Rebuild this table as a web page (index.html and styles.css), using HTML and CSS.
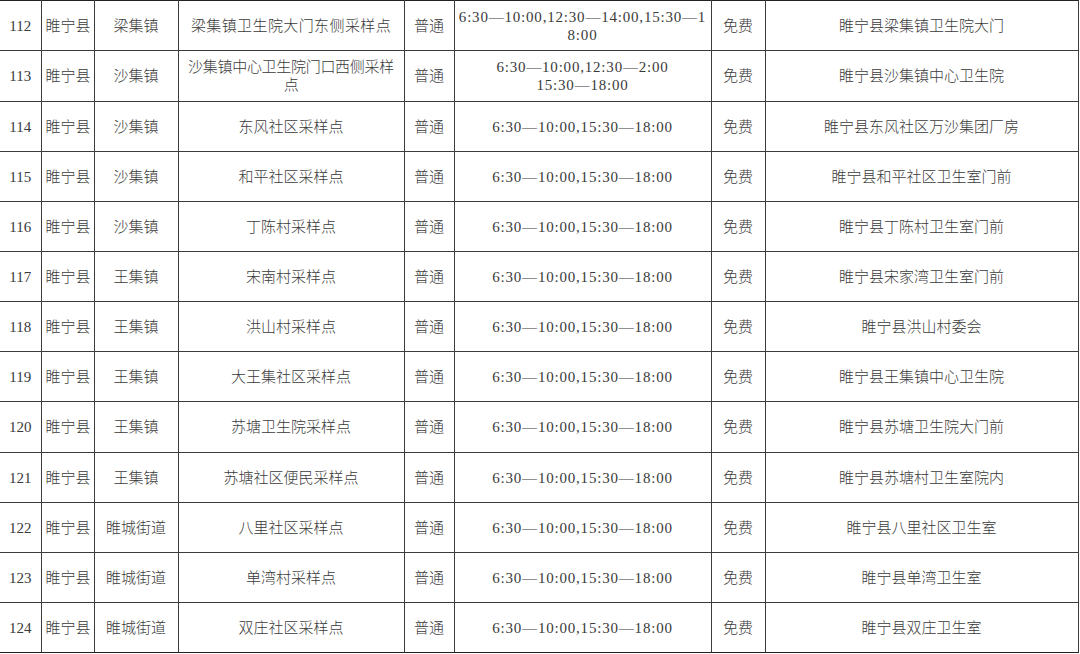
FILE: index.html
```html
<!DOCTYPE html>
<html lang="zh-CN">
<head>
<meta charset="utf-8">
<title>采样点列表</title>
<link rel="stylesheet" href="styles.css">
</head>
<body>
<table class="sites">
  <colgroup>
    <col class="c-no"><col class="c-county"><col class="c-town"><col class="c-site">
    <col class="c-type"><col class="c-time"><col class="c-fee"><col class="c-addr">
  </colgroup>
  <tbody>
    <tr><td>112</td><td>睢宁县</td><td>梁集镇</td><td class="wide">梁集镇卫生院大门东侧采样点</td><td>普通</td><td class="time">6:30—10:00,12:30—14:00,15:30—1<br>8:00</td><td>免费</td><td>睢宁县梁集镇卫生院大门</td></tr>
    <tr class="tall"><td>113</td><td>睢宁县</td><td>沙集镇</td><td class="tight">沙集镇中心卫生院门口西侧采样<br>点</td><td>普通</td><td class="time">6:30—10:00,12:30—2:00<br>15:30—18:00</td><td>免费</td><td>睢宁县沙集镇中心卫生院</td></tr>
    <tr><td>114</td><td>睢宁县</td><td>沙集镇</td><td>东风社区采样点</td><td>普通</td><td class="time">6:30—10:00,15:30—18:00</td><td>免费</td><td>睢宁县东风社区万沙集团厂房</td></tr>
    <tr><td>115</td><td>睢宁县</td><td>沙集镇</td><td>和平社区采样点</td><td>普通</td><td class="time">6:30—10:00,15:30—18:00</td><td>免费</td><td>睢宁县和平社区卫生室门前</td></tr>
    <tr><td>116</td><td>睢宁县</td><td>沙集镇</td><td>丁陈村采样点</td><td>普通</td><td class="time">6:30—10:00,15:30—18:00</td><td>免费</td><td>睢宁县丁陈村卫生室门前</td></tr>
    <tr><td>117</td><td>睢宁县</td><td>王集镇</td><td>宋南村采样点</td><td>普通</td><td class="time">6:30—10:00,15:30—18:00</td><td>免费</td><td>睢宁县宋家湾卫生室门前</td></tr>
    <tr><td>118</td><td>睢宁县</td><td>王集镇</td><td>洪山村采样点</td><td>普通</td><td class="time">6:30—10:00,15:30—18:00</td><td>免费</td><td>睢宁县洪山村委会</td></tr>
    <tr><td>119</td><td>睢宁县</td><td>王集镇</td><td>大王集社区采样点</td><td>普通</td><td class="time">6:30—10:00,15:30—18:00</td><td>免费</td><td>睢宁县王集镇中心卫生院</td></tr>
    <tr class="tall"><td>120</td><td>睢宁县</td><td>王集镇</td><td>苏塘卫生院采样点</td><td>普通</td><td class="time">6:30—10:00,15:30—18:00</td><td>免费</td><td>睢宁县苏塘卫生院大门前</td></tr>
    <tr><td>121</td><td>睢宁县</td><td>王集镇</td><td>苏塘社区便民采样点</td><td>普通</td><td class="time">6:30—10:00,15:30—18:00</td><td>免费</td><td>睢宁县苏塘村卫生室院内</td></tr>
    <tr><td>122</td><td>睢宁县</td><td>睢城街道</td><td>八里社区采样点</td><td>普通</td><td class="time">6:30—10:00,15:30—18:00</td><td>免费</td><td>睢宁县八里社区卫生室</td></tr>
    <tr><td>123</td><td>睢宁县</td><td>睢城街道</td><td>单湾村采样点</td><td>普通</td><td class="time">6:30—10:00,15:30—18:00</td><td>免费</td><td>睢宁县单湾卫生室</td></tr>
    <tr><td>124</td><td>睢宁县</td><td>睢城街道</td><td>双庄社区采样点</td><td>普通</td><td class="time">6:30—10:00,15:30—18:00</td><td>免费</td><td>睢宁县双庄卫生室</td></tr>
  </tbody>
</table>
</body>
</html>
```

FILE: styles.css
```css
html, body {
  margin: 0;
  padding: 0;
  background: #ffffff;
}

.sites {
  border-collapse: collapse;
  table-layout: fixed;
  width: 1078px;
  font-family: "Liberation Serif", "Noto Sans CJK SC", serif;
  font-size: 15px;
  font-weight: 300;
  color: #3a3a3a;
}

.c-no { width: 41px; }
.c-county { width: 53px; }
.c-town { width: 84px; }
.c-site { width: 226px; }
.c-type { width: 50px; }
.c-time { width: 257px; }
.c-fee { width: 54px; }
.c-addr { width: 313px; }

.sites td {
  height: 49px;
  padding: 0 4px;
  border: 1px solid #3c3c3c;
  text-align: center;
  vertical-align: middle;
  line-height: 18px;
  white-space: nowrap;
  overflow: hidden;
}

.sites tr.tall td {
  height: 50px;
}

.sites td:first-child {
  border-left: none;
}

.sites tr:first-child td {
  border-top: 1px solid #222;
}

.sites tr:last-child td {
  border-bottom: 1px solid #222;
}

.sites td.time {
  letter-spacing: 0.8px;
}

.sites td.wide {
  letter-spacing: 0.4px;
}

.sites td.tight {
  letter-spacing: -0.3px;
}
```
